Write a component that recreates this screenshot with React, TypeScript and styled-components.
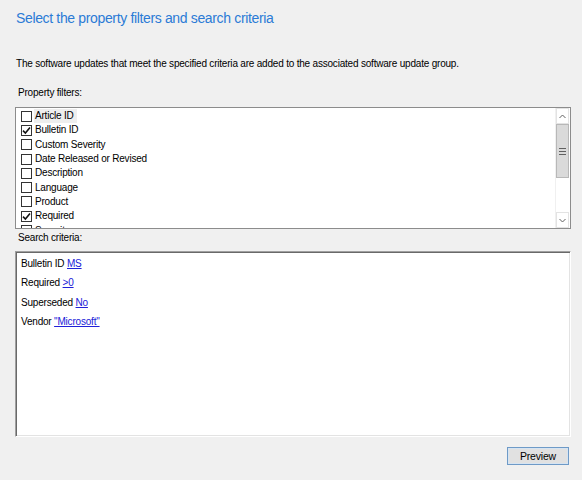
import React from 'react';
import styled, { createGlobalStyle } from 'styled-components';

const GlobalStyle = createGlobalStyle`
  html, body {
    margin: 0;
    padding: 0;
    background: #f0f0f0;
  }
  * {
    box-sizing: border-box;
  }
`;

const Page = styled.div`
  width: 582px;
  height: 480px;
  padding: 9px 11px 0 15px;
  background: #f0f0f0;
  font-family: "Liberation Sans", Arial, sans-serif;
  font-size: 10px;
  letter-spacing: -0.2px;
  color: #000;
  display: flex;
  flex-direction: column;
  overflow: hidden;
`;

const Title = styled.h1`
  margin: 0 0 0 1px;
  font-size: 14px;
  letter-spacing: -0.35px;
  line-height: 18px;
  font-weight: normal;
  color: #2b7bd6;
`;

const Description = styled.p`
  margin: 30px 0 0 1px;
  line-height: 14px;
`;

const Label = styled.div<{ $top: number }>`
  margin: ${(p) => p.$top}px 0 0 3px;
  line-height: 14px;
`;

const ListBox = styled.div`
  margin-top: 7px;
  height: 122px;
  border: 1px solid #8c8c8c;
  background: #fff;
  display: flex;
`;

const Items = styled.div`
  flex: 1;
  overflow: hidden;
  padding-top: 1px;
`;

const Item = styled.div`
  height: 14.3px;
  display: flex;
  align-items: center;
  padding-left: 5px;
  gap: 2px;
`;

const Box = styled.span`
  width: 11px;
  height: 11px;
  border: 1px solid #333;
  background: #fff;
  display: flex;
  align-items: center;
  justify-content: center;
  flex-shrink: 0;
`;

const ItemText = styled.span<{ $focused?: boolean }>`
  line-height: 14px;
  padding: 0 3px 0 1px;
  background: ${(p) => (p.$focused ? '#eeeeee' : 'transparent')};
`;

const ScrollBar = styled.div`
  width: 14px;
  margin: 0 1px 0 0;
  display: flex;
  flex-direction: column;
  border-left: 1px solid #f0f0f0;
  background: #fff;
`;

const ArrowButton = styled.div`
  height: 16px;
  display: flex;
  align-items: center;
  justify-content: center;
  background: #fff;
  border: 1px solid #e3e3e3;
`;

const Track = styled.div`
  flex: 1;
  display: flex;
  flex-direction: column;
`;

const Thumb = styled.div`
  height: 54px;
  background: #dadada;
  border: 1px solid #b8b8b8;
  display: flex;
  align-items: center;
  justify-content: center;
`;

const CriteriaBox = styled.div`
  margin-top: 6px;
  height: 186px;
  background: #fff;
  border-style: solid;
  border-width: 1px;
  border-color: #a0a0a0 #fff #fff #a0a0a0;
  box-shadow: inset 1px 1px 0 #696969, inset -1px -1px 0 #e3e3e3;
  padding: 2px 0 0 5px;
`;

const Criterion = styled.div`
  line-height: 19.4px;
`;

const Link = styled.a`
  color: #2020d8;
  text-decoration: underline;
  cursor: pointer;
`;

const Footer = styled.div`
  display: flex;
  justify-content: flex-end;
  margin-top: 10px;
  padding-right: 2px;
`;

const Button = styled.button`
  width: 62px;
  height: 18px;
  padding: 0;
  font-family: inherit;
  font-size: 10.5px;
  letter-spacing: -0.2px;
  color: #000;
  background: #e1e1e1;
  border: 1px solid #6e9ac7;
  box-shadow: inset 0 0 0 1px #d6e4f2;
`;

const Check = () => (
  <svg width="9" height="9" viewBox="0 0 9 9">
    <path d="M1 4.6 L3.4 7 L8 1.6" fill="none" stroke="#111" strokeWidth="1.6" />
  </svg>
);

const Chevron = ({ up }: { up?: boolean }) => (
  <svg width="7" height="5" viewBox="0 0 7 5">
    <path
      d={up ? 'M0.5 4 L3.5 1 L6.5 4' : 'M0.5 1 L3.5 4 L6.5 1'}
      fill="none"
      stroke="#606060"
      strokeWidth="1"
    />
  </svg>
);

const Grip = () => (
  <svg width="7" height="7" viewBox="0 0 7 7">
    <rect x="0" y="0" width="7" height="1" fill="#606060" />
    <rect x="0" y="3" width="7" height="1" fill="#606060" />
    <rect x="0" y="6" width="7" height="1" fill="#606060" />
  </svg>
);

const filters = [
  { name: 'Article ID', checked: false },
  { name: 'Bulletin ID', checked: true },
  { name: 'Custom Severity', checked: false },
  { name: 'Date Released or Revised', checked: false },
  { name: 'Description', checked: false },
  { name: 'Language', checked: false },
  { name: 'Product', checked: false },
  { name: 'Required', checked: true },
  { name: 'Severity', checked: false },
];

const criteria = [
  { name: 'Bulletin ID', value: 'MS' },
  { name: 'Required', value: '>0' },
  { name: 'Superseded', value: 'No' },
  { name: 'Vendor', value: '"Microsoft"' },
];

export default function App() {
  return (
    <>
      <GlobalStyle />
      <Page>
        <Title>Select the property filters and search criteria</Title>
        <Description>
          The software updates that meet the specified criteria are added to the associated software update group.
        </Description>
        <Label $top={15}>Property filters:</Label>
        <ListBox>
          <Items>
            {filters.map((f, i) => (
              <Item key={f.name}>
                <Box>{f.checked && <Check />}</Box>
                <ItemText $focused={i === 0}>{f.name}</ItemText>
              </Item>
            ))}
          </Items>
          <ScrollBar>
            <ArrowButton>
              <Chevron up />
            </ArrowButton>
            <Track>
              <Thumb>
                <Grip />
              </Thumb>
            </Track>
            <ArrowButton>
              <Chevron />
            </ArrowButton>
          </ScrollBar>
        </ListBox>
        <Label $top={2}>Search criteria:</Label>
        <CriteriaBox>
          {criteria.map((c) => (
            <Criterion key={c.name}>
              {c.name} <Link>{c.value}</Link>
            </Criterion>
          ))}
        </CriteriaBox>
        <Footer>
          <Button>Preview</Button>
        </Footer>
      </Page>
    </>
  );
}
